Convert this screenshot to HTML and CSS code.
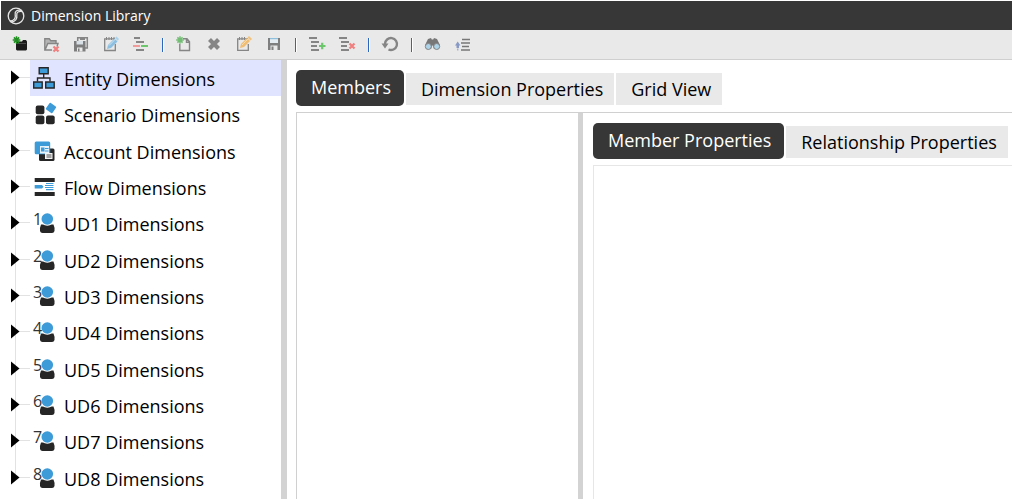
FILE: index.html
```html
<!DOCTYPE html>
<html lang="en">
<head>
<meta charset="utf-8">
<title>Dimension Library</title>
<link rel="stylesheet" href="styles.css">
</head>
<body>
<svg width="0" height="0" class="defs" aria-hidden="true">
  <defs>
    <g id="star"><path d="M0-3.8V3.8M-3.8 0H3.8M-2.6-2.6L2.6 2.6M2.6-2.6L-2.6 2.6" fill="none" stroke-width="1.5"/></g>
    <g id="person">
      <path d="M11 19.500h12.500q1.500 3.500 1 6.500q-.5 2-2.500 2H12.500q-2 0-2.500-2q-.5-3 1-6.500z" fill="#262626"/>
      <circle cx="17.300" cy="14" r="6.700" fill="#fff"/>
      <circle cx="17.300" cy="14" r="5.800" fill="#3d9bd8"/>
    </g>
    <g id="arrow"><path d="M11 10.500L19.500 17.500L11 24.500z" fill="#000"/></g>
  </defs>
</svg>
<header class="titlebar">
  <svg class="logo" width="18" height="18" viewBox="0 0 18 18" aria-hidden="true">
    <g fill="none" stroke="#e6e6e6" stroke-width="1.300">
      <circle cx="9" cy="9" r="7.800"/>
      <path d="M14.500 3.500C10.500 2.500 7.500 4 8.200 7.500C9 11 7 14 2.800 13.800"/>
      <path d="M15.300 4.500C11.500 4 9.300 5.200 9.800 8C10.400 11.700 8.500 15 3.800 15"/>
    </g>
  </svg>
  <h1 class="title">Dimension Library</h1>
</header>
<div class="toolbar" role="toolbar" aria-label="Dimension tools">
  <button class="tool" aria-label="Create dimension"><svg width="30" height="29" viewBox="0 0 30 29"><path d="M11 12.500l1-1h5l1-1.500h3l1 1.500V19.500l-1 1H12l-1-1z" fill="#1c1c1c"/><path d="M12 13.500h9" stroke="#555" stroke-width=".8"/><use href="#star" x="11.500" y="10" stroke="#239023"/></svg></button>
  <button class="tool" aria-label="Delete dimension"><svg width="30" height="29" viewBox="0 0 30 29"><path d="M10 9h4.500l1.500 2H21v2.500h-8L10.500 19z" fill="#b5b5b5"/><path d="M17 20H9.800V8.800h4.500l1.500 2H21V13M10 20l2.800-6.500H23l-1 3" fill="none" stroke="#858585" stroke-width="1.400"/><path d="M18.500 16.500l5 5m0-5l-5 5" stroke="#f07f7f" stroke-width="2.200"/></svg></button>
  <button class="tool" aria-label="Save all"><svg width="30" height="29" viewBox="0 0 30 29"><path d="M12.700 11V7.700H22.300V18H20" fill="none" stroke="#858585" stroke-width="1.500"/><path d="M15 7h5v3h-5z" fill="#858585"/><path d="M9 11h11.500v10.500H9z" fill="#7d7d7d"/><path d="M11.500 11h6.500v3.500h-6.500z" fill="#d9e1e7"/><path d="M12 17.500h5.500v4H12z" fill="#e9e9e9"/><path d="M13 18.500h1.500v3H13z" fill="#7d7d7d"/></svg></button>
  <button class="tool" aria-label="Rename dimension"><svg width="30" height="29" viewBox="0 0 30 29"><path d="M20 8.800H9.700V20.500H20.300V14" fill="none" stroke="#858585" stroke-width="1.300"/><path d="M11.500 7v3m2.500-3v3m2.500-3v3m2.500-3v3" stroke="#858585"/><path d="M12 19l1-4 6.500-6.500 3 3L16 18z" fill="#8dc0e0"/><path d="M20 8l1.500-1.500L24 9l-1.300 1.800z" fill="#a9d3ec"/><path d="M14 15.500L20.500 9" stroke="#c9e4f4"/></svg></button>
  <button class="tool" aria-label="Dimension structure"><svg width="30" height="29" viewBox="0 0 30 29"><path d="M9 8h6M11 12h8M11 20h8" stroke="#858585" stroke-width="2"/><path d="M8 16h7" stroke="#f19a9a" stroke-width="2"/><path d="M16 16h7" stroke="#6cc76c" stroke-width="2"/></svg></button>
  <span class="separator"></span>
  <button class="tool" aria-label="Create member"><svg width="30" height="29" viewBox="0 0 30 29"><path d="M15 8.700h4l2.500 3V20.500h-9.700V14M18.500 8.500v3.700h3" fill="none" stroke="#858585" stroke-width="1.400"/><use href="#star" x="12" y="10" stroke="#74bd74"/></svg></button>
  <button class="tool" aria-label="Delete member"><svg width="30" height="29" viewBox="0 0 30 29"><path d="M11.500 9.500l9 9m0-9l-9 9" stroke="#858585" stroke-width="4.200"/></svg></button>
  <button class="tool" aria-label="Rename member"><svg width="30" height="29" viewBox="0 0 30 29"><path d="M20 8.800H9.700V20.300H20.300V14" fill="none" stroke="#858585" stroke-width="1.300"/><path d="M11.500 7v3m2.500-3v3m2.500-3v3" stroke="#858585"/><path d="M12 18l1-4 6-6 3 3-6 6z" fill="#efbd73"/><path d="M19.500 7.500L21 6l3 3-1.500 1.500z" fill="#f2c27d"/><path d="M14 15l6-6" stroke="#f8dcae"/></svg></button>
  <button class="tool" aria-label="Save"><svg width="30" height="29" viewBox="0 0 30 29"><path d="M10 8h12v12H10z" fill="#7f7f7f"/><path d="M12 9h8v4h-8z" fill="#e5edf3"/><path d="M12 8h8v1.200h-8z" fill="#8ebfdc"/><path d="M12.500 15.500h7V20h-7z" fill="#e9e9e9"/><path d="M13.500 16.500h2V20h-2z" fill="#7f7f7f"/></svg></button>
  <span class="separator"></span>
  <button class="tool" aria-label="Add relationship"><svg width="30" height="29" viewBox="0 0 30 29"><path d="M8 8h8M10 12h8M10 16h6M10 20h8" stroke="#858585" stroke-width="2"/><path d="M18 16h6.500M21.200 12.800v6.500" stroke="#6cc76c" stroke-width="2.200"/></svg></button>
  <button class="tool" aria-label="Remove relationship"><svg width="30" height="29" viewBox="0 0 30 29"><path d="M8 8h8M10 12h8M10 16h6M10 20h8" stroke="#858585" stroke-width="2"/><path d="M18.500 13.500l5 5m0-5l-5 5" stroke="#f07f7f" stroke-width="2.200"/></svg></button>
  <span class="separator"></span>
  <button class="tool" aria-label="Refresh"><svg width="30" height="29" viewBox="0 0 30 29"><path d="M11 14a6 6 0 1 1 3.500 5.500" fill="none" stroke="#858585" stroke-width="2.400"/><path d="M7.500 13.500h7L11 18.500z" fill="#858585"/></svg></button>
  <span class="separator"></span>
  <button class="tool" aria-label="Search"><svg width="30" height="29" viewBox="0 0 30 29"><path d="M11 9l3-1 .8 1.500h1.400L17 8l3 1 3 6-3 4h-3l-1.500-4L14 19h-3l-3-4z" fill="#777"/><circle cx="11.300" cy="16.500" r="3" fill="#add3e8" stroke="#858585"/><circle cx="19.700" cy="16.500" r="3" fill="#add3e8" stroke="#858585"/></svg></button>
  <button class="tool" aria-label="Collapse"><svg width="30" height="29" viewBox="0 0 30 29"><path d="M15 9.500h8M14 13h9M15 16.500h7M14 20h9" stroke="#777" stroke-width="1.400"/><path d="M8 15.500l2.700-4 2.700 4H12V18H9.500v-2.500z" fill="#8799c4"/><path d="M10.700 18.500v2" stroke="#a5b0cc" stroke-width="1.500"/></svg></button>
</div>
<main class="workspace">
  <ul class="tree" aria-label="Dimension types">
    <li class="node"><svg class="expander" width="30" height="36" viewBox="0 0 30 36"><use href="#arrow"/></svg>
      <button class="item selected"><svg width="34" height="36" viewBox="0 0 34 36"><g fill="#3d9bd8" stroke="#262626" stroke-width="1.400"><path d="M9.200 7.700h9v6h-9zM3.700 22h8.500v6H3.700zM15.700 22h8.500v6h-8.500z"/><path d="M13.700 14v4M7.500 21.500V18H20v3.500" fill="none"/></g></svg><span>Entity Dimensions</span></button></li>
    <li class="node"><svg class="expander" width="30" height="36" viewBox="0 0 30 36"><use href="#arrow"/></svg>
      <button class="item"><svg width="34" height="36" viewBox="0 0 34 36"><g fill="#262626"><rect x="5.700" y="9.500" width="8.700" height="8.700" rx="2"/><rect x="5.700" y="19.500" width="8.700" height="8.700" rx="2"/><rect x="16" y="19.500" width="8.700" height="8.700" rx="2"/></g><rect x="17" y="8" width="8" height="8" rx="1" fill="#3d9bd8" transform="rotate(35 21 12)"/></svg><span>Scenario Dimensions</span></button></li>
    <li class="node"><svg class="expander" width="30" height="36" viewBox="0 0 30 36"><use href="#arrow"/></svg>
      <button class="item"><svg width="34" height="36" viewBox="0 0 34 36"><rect x="9" y="15.500" width="15.500" height="12.500" rx="1.500" fill="#262626"/><rect x="4.700" y="8.500" width="15.500" height="12.700" rx="1.500" fill="#3d9bd8"/><path d="M10 13h9v7.500h-9z" fill="#e6f1f8"/><path d="M11 14.500h3.500v4H11zM15 15h3.500v1H15zM15 17.500h3.500v1H15z" fill="#3d9bd8"/><path d="M15 20h7.500v6H15z" fill="#f4f4f4"/><path d="M16.500 22h5M16.500 24h5" stroke="#262626" stroke-width=".8"/></svg><span>Account Dimensions</span></button></li>
    <li class="node"><svg class="expander" width="30" height="36" viewBox="0 0 30 36"><use href="#arrow"/></svg>
      <button class="item"><svg width="34" height="36" viewBox="0 0 34 36"><path d="M4.700 9h20v4h-20zM4.700 23h20v4h-20z" fill="#262626"/><path d="M4.700 16H12l1.500 1.800L12 19.500H4.700z" fill="#3d9bd8"/><path d="M16 14.500h7.500M15 16.500h8.500M15 18.500h8.500M16 20.700h7.500" stroke="#3d9bd8" stroke-width="1.200"/></svg><span>Flow Dimensions</span></button></li>
    <li class="node"><svg class="expander" width="30" height="36" viewBox="0 0 30 36"><use href="#arrow"/></svg>
      <button class="item"><svg width="34" height="36" viewBox="0 0 34 36"><use href="#person"/><text class="digit" x="3" y="20">1</text></svg><span>UD1 Dimensions</span></button></li>
    <li class="node"><svg class="expander" width="30" height="36" viewBox="0 0 30 36"><use href="#arrow"/></svg>
      <button class="item"><svg width="34" height="36" viewBox="0 0 34 36"><use href="#person"/><text class="digit" x="3" y="20">2</text></svg><span>UD2 Dimensions</span></button></li>
    <li class="node"><svg class="expander" width="30" height="36" viewBox="0 0 30 36"><use href="#arrow"/></svg>
      <button class="item"><svg width="34" height="36" viewBox="0 0 34 36"><use href="#person"/><text class="digit" x="3" y="20">3</text></svg><span>UD3 Dimensions</span></button></li>
    <li class="node"><svg class="expander" width="30" height="36" viewBox="0 0 30 36"><use href="#arrow"/></svg>
      <button class="item"><svg width="34" height="36" viewBox="0 0 34 36"><use href="#person"/><text class="digit" x="3" y="20">4</text></svg><span>UD4 Dimensions</span></button></li>
    <li class="node"><svg class="expander" width="30" height="36" viewBox="0 0 30 36"><use href="#arrow"/></svg>
      <button class="item"><svg width="34" height="36" viewBox="0 0 34 36"><use href="#person"/><text class="digit" x="3" y="20">5</text></svg><span>UD5 Dimensions</span></button></li>
    <li class="node"><svg class="expander" width="30" height="36" viewBox="0 0 30 36"><use href="#arrow"/></svg>
      <button class="item"><svg width="34" height="36" viewBox="0 0 34 36"><use href="#person"/><text class="digit" x="3" y="20">6</text></svg><span>UD6 Dimensions</span></button></li>
    <li class="node"><svg class="expander" width="30" height="36" viewBox="0 0 30 36"><use href="#arrow"/></svg>
      <button class="item"><svg width="34" height="36" viewBox="0 0 34 36"><use href="#person"/><text class="digit" x="3" y="20">7</text></svg><span>UD7 Dimensions</span></button></li>
    <li class="node"><svg class="expander" width="30" height="36" viewBox="0 0 30 36"><use href="#arrow"/></svg>
      <button class="item"><svg width="34" height="36" viewBox="0 0 34 36"><use href="#person"/><text class="digit" x="3" y="20">8</text></svg><span>UD8 Dimensions</span></button></li>
  </ul>
  <section class="content">
    <div class="tabs" role="tablist">
      <button class="tab active" role="tab" aria-selected="true">Members</button>
      <button class="tab" role="tab" aria-selected="false">Dimension Properties</button>
      <button class="tab" role="tab" aria-selected="false">Grid View</button>
    </div>
    <div class="panel" role="tabpanel">
      <div class="members"></div>
      <section class="details">
        <div class="tabs" role="tablist">
          <button class="tab active" role="tab" aria-selected="true">Member Properties</button>
          <button class="tab" role="tab" aria-selected="false">Relationship Properties</button>
        </div>
        <div class="properties" role="tabpanel"></div>
      </section>
    </div>
  </section>
</main>
</body>
</html>
```
FILE: styles.css
```css
* {
  box-sizing: border-box;
}

body {
  margin: 0;
  min-height: 100vh;
  display: flex;
  flex-direction: column;
  background: #fff;
  color: #000;
  font-family: "Open Sans", "Noto Sans", sans-serif;
  font-size: 18px;
}

button {
  margin: 0;
  padding: 0;
  border: 0;
  background: none;
  color: inherit;
  font: inherit;
}

svg {
  display: block;
  flex: none;
}

.defs {
  position: absolute;
}

.titlebar {
  display: flex;
  align-items: center;
  gap: 6px;
  height: 30px;
  padding-left: 6px;
  border-top: 1px solid #fff;
  border-left: 1px solid #fff;
  background: #373737;
  color: #fff;
}

.title {
  margin: 0;
  font-size: 14px;
  font-weight: 400;
  line-height: 20px;
}

.toolbar {
  display: flex;
  align-items: center;
  height: 30px;
  padding-left: 5px;
  border-bottom: 1px solid #cfcfcf;
  background: #e9e9e9;
}

.separator {
  width: 2px;
  height: 14px;
  margin: 0 4px 0 7px;
  border-left: 1px solid #2b68bd;
  background: #fff;
}

.workspace {
  flex: 1;
  display: flex;
}

.tree {
  display: grid;
  grid-auto-rows: minmax(36px, 1fr);
  width: 287px;
  flex: none;
  margin: 0;
  padding: 0 0 3px;
  border-right: 6px solid #d3d3d3;
  list-style: none;
}

.node {
  display: flex;
  background: linear-gradient(#e2e2e2, #e2e2e2) 15px 0 / 1px 100% no-repeat,
    linear-gradient(#e2e2e2, #e2e2e2) 15px 17px / 15px 1px no-repeat;
}

.node:first-child {
  background-position: 15px 18px, 15px 17px;
}

.node:last-child {
  background-size: 1px 18px, 15px 1px;
}

.item {
  flex: 1;
  display: flex;
  height: 36px;
  line-height: 38px;
  text-align: left;
}

.item.selected {
  background: #e1e4ff;
}

.digit {
  font-size: 16px;
  fill: #333;
}

.content {
  flex: 1;
  display: flex;
  flex-direction: column;
  min-width: 0;
  padding: 10px 0 0 9px;
}

.tabs {
  display: flex;
  align-items: center;
  gap: 2px;
  height: 36px;
}

.tab {
  height: 32px;
  padding: 0 11px 0 15px;
  margin-top: 2px;
  background: #e9e9e9;
  line-height: 32px;
  white-space: nowrap;
}

.tab.active {
  height: 36px;
  padding-right: 13px;
  padding-bottom: 2px;
  margin-top: 0;
  border-radius: 5px;
  background: #373737;
  color: #fff;
}

.panel {
  flex: 1;
  display: flex;
  margin-top: 6px;
  border-top: 1px solid #d0d0d0;
  border-left: 1px solid #d0d0d0;
}

.members {
  width: 286px;
  flex: none;
  border-right: 5px solid #d3d3d3;
}

.details {
  flex: 1;
  display: flex;
  flex-direction: column;
  min-width: 0;
  padding: 10px 0 0 10px;
}

.properties {
  flex: 1;
  margin-top: 6px;
  border-top: 1px solid #e6e6e6;
  border-left: 1px solid #e6e6e6;
}
```
